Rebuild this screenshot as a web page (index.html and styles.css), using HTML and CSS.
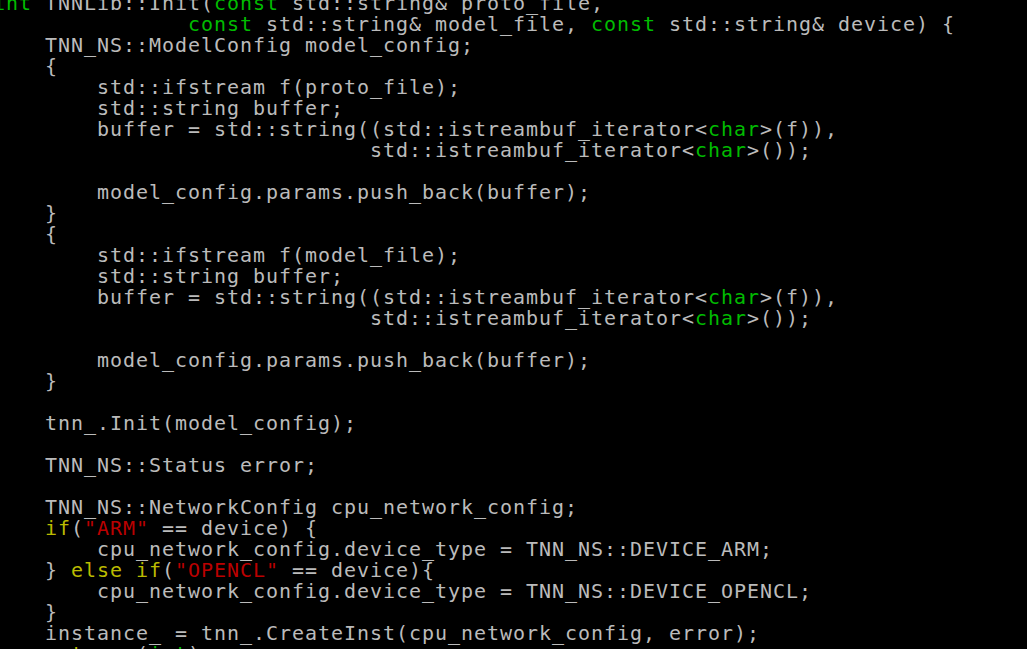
FILE: index.html
```html
<!DOCTYPE html>
<html>
<head>
<meta charset="utf-8">
<link rel="stylesheet" href="styles.css">
</head>
<body>
<main class="term">
<pre class="code"><span class="kw">int</span> TNNLib::Init(<span class="kw">const</span> std::string&amp; proto_file,
               <span class="kw">const</span> std::string&amp; model_file, <span class="kw">const</span> std::string&amp; device) {
    TNN_NS::ModelConfig model_config;
    {
        std::ifstream f(proto_file);
        std::string buffer;
        buffer = std::string((std::istreambuf_iterator&lt;<span class="kw">char</span>&gt;(f)),
                             std::istreambuf_iterator&lt;<span class="kw">char</span>&gt;());

        model_config.params.push_back(buffer);
    }
    {
        std::ifstream f(model_file);
        std::string buffer;
        buffer = std::string((std::istreambuf_iterator&lt;<span class="kw">char</span>&gt;(f)),
                             std::istreambuf_iterator&lt;<span class="kw">char</span>&gt;());

        model_config.params.push_back(buffer);
    }

    tnn_.Init(model_config);

    TNN_NS::Status error;

    TNN_NS::NetworkConfig cpu_network_config;
    <span class="ctl">if</span>(<span class="str">"ARM"</span> == device) {
        cpu_network_config.device_type = TNN_NS::DEVICE_ARM;
    } <span class="ctl">else if</span>(<span class="str">"OPENCL"</span> == device){
        cpu_network_config.device_type = TNN_NS::DEVICE_OPENCL;
    }
    instance_ = tnn_.CreateInst(cpu_network_config, error);
    <span class="ctl">return</span> (<span class="kw">int</span>)error;
}</pre>
</main>
</body>
</html>
```
FILE: styles.css
```css
html, body {
  margin: 0;
  padding: 0;
  background: #000;
}
.term {
  width: 1027px;
  height: 649px;
  overflow: hidden;
  background: #000;
}
.code {
  margin: -7px 0 0 -7px;
  font-family: "DejaVu Sans Mono", monospace;
  font-size: 20px;
  letter-spacing: 0.96px;
  line-height: 21px;
  color: #bbbbbb;
  white-space: pre;
}
.kw { color: #00bb00; }
.ctl { color: #bbbb00; }
.str { color: #bb0000; }
```
